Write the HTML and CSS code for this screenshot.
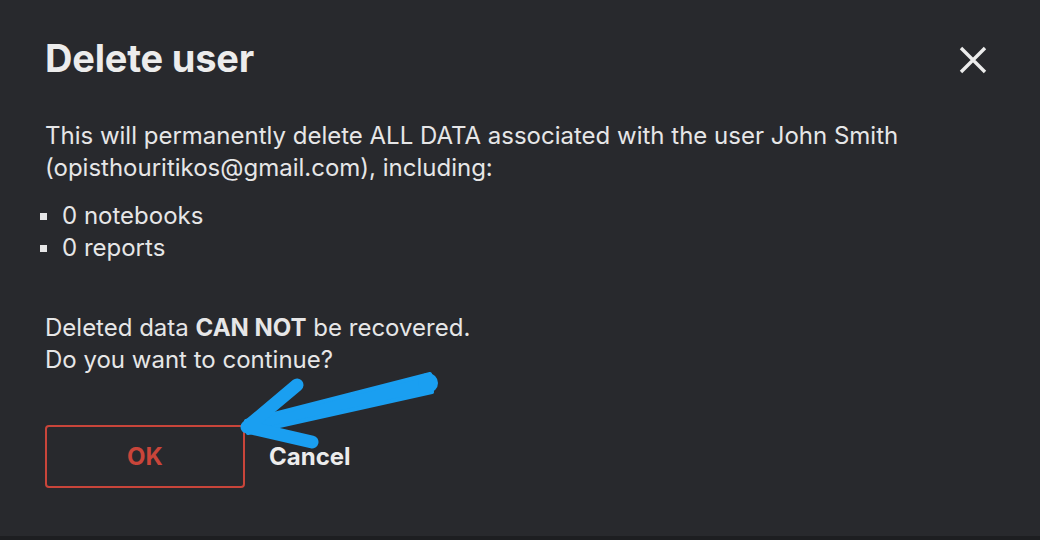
FILE: index.html
```html
<!DOCTYPE html>
<html>
<head>
<meta charset="utf-8">
<link rel="stylesheet" href="styles.css">
</head>
<body>
<div class="dialog">
  <div class="header">
    <h1 class="title">Delete user</h1>
    <button class="close" aria-label="Close">
      <svg width="28" height="28" viewBox="0 0 28 28"><path d="M2 2 L26 26 M26 2 L2 26" stroke="#ececec" stroke-width="3.4" stroke-linecap="butt"/></svg>
    </button>
  </div>
  <div class="body">
    <p class="text">This will permanently delete ALL DATA associated with the user John Smith (opisthouritikos@gmail.com), including:</p>
    <ul class="list">
      <li>0 notebooks</li>
      <li>0 reports</li>
    </ul>
    <p class="text warn">Deleted data <b>CAN NOT</b> be recovered.<br>Do you want to continue?</p>
  </div>
  <div class="actions">
    <button class="btn ok">OK</button>
    <button class="btn cancel">Cancel</button>
  </div>
  <svg class="arrow" width="1040" height="540" viewBox="0 0 1040 540">
    <g fill="#1a9ff1" stroke="#1a9ff1" stroke-linecap="round" stroke-linejoin="round">
      <path d="M430 374 L432 392 L248 433 L246 421 Z" stroke-width="4"/>
      <circle cx="428" cy="383" r="10" stroke="none"/>
      <path d="M297 385 L247 427 L312 442" fill="none" stroke-width="13"/>
    </g>
  </svg>
</div>
<div class="footer"></div>
</body>
</html>
```
FILE: styles.css
```css
html, body {
  margin: 0;
  padding: 0;
  background: #28292d;
}
body {
  width: 1040px;
  height: 540px;
  overflow: hidden;
  font-family: Inter, "Noto Sans", sans-serif;
  color: #e6e6e7;
  display: flex;
  flex-direction: column;
}
.dialog {
  position: relative;
  flex: 1;
  padding: 0 46px 0 45px;
  display: flex;
  flex-direction: column;
}
.header {
  display: flex;
  justify-content: space-between;
  align-items: center;
  height: 120px;
}
.title {
  margin: -4px 0 0 0;
  font-size: 38px;
  font-weight: 700;
  color: #ececec;
  letter-spacing: -0.2px;
}
.close {
  background: none;
  border: 0;
  padding: 0;
  margin-right: 7px;
  width: 28px;
  height: 28px;
  display: flex;
}
.body {
  font-size: 24px;
  line-height: 32px;
}
.text {
  margin: 0;
}
.list {
  list-style: none;
  margin: 0;
  padding: 16px 0 0 0;
}
.list li {
  display: flex;
  align-items: center;
  gap: 15px;
}
.list li::before {
  content: "";
  width: 7px;
  height: 7px;
  background: #e6e6e7;
  margin-left: -5px;
}
.warn {
  margin-top: 48px;
}
.actions {
  display: flex;
  align-items: center;
  gap: 24px;
  margin-top: 49px;
}
.btn {
  font-family: Inter, "Noto Sans", sans-serif;
  font-weight: 700;
  font-size: 24px;
  background: none;
  border: 0;
  padding: 0;
}
.ok {
  width: 200px;
  height: 63px;
  border: 2px solid #c9453a;
  border-radius: 4px;
  color: #c9453a;
}
.cancel {
  color: #ececec;
}
.arrow {
  position: absolute;
  left: 0;
  top: 0;
  pointer-events: none;
}
.footer {
  height: 4px;
  background: #1d1e21;
}
```
